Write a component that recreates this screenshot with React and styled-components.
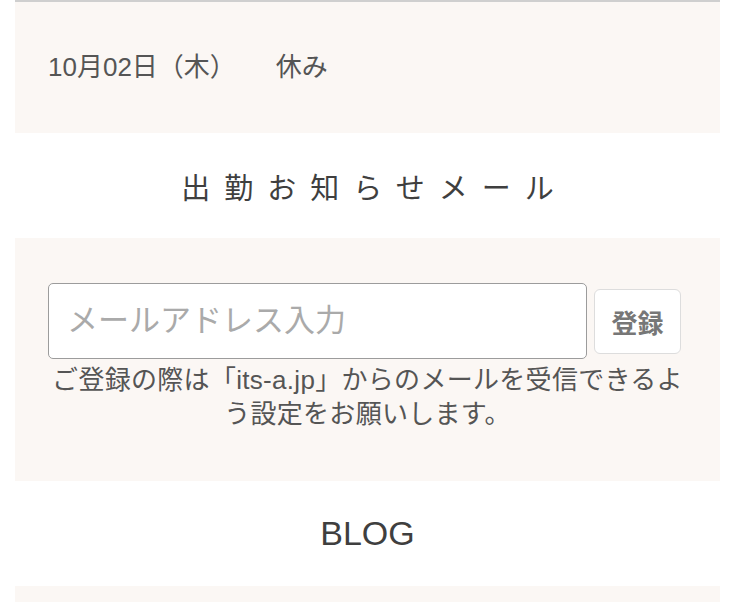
import React from 'react';
import styled, { createGlobalStyle } from 'styled-components';

const GlobalStyle = createGlobalStyle`
  html, body {
    margin: 0;
    padding: 0;
    background: #fff;
  }
  body {
    font-family: "Liberation Sans", "Noto Sans CJK JP", sans-serif;
    color: #444;
  }
`;

const Page = styled.div`
  padding: 0 10px 0 15px;
`;

const Panel = styled.section`
  background: #fbf7f4;
  border-top: ${props => (props.$topLine ? '2px solid #cfcfcf' : 'none')};
  height: ${props => props.$height}px;
  box-sizing: border-box;
`;

const DayRow = styled.div`
  display: flex;
  align-items: center;
  height: 100%;
  box-sizing: border-box;
  padding: 0 0 6px 33px;
  font-size: 26px;
  color: #555;
`;

const DayStatus = styled.span`
  margin-left: 40px;
`;

const Heading = styled.h2`
  margin: 0;
  height: ${props => props.$height}px;
  display: flex;
  align-items: center;
  justify-content: center;
  font-weight: 400;
  font-size: ${props => props.$size}px;
  letter-spacing: ${props => props.$spacing || 0}px;
  text-indent: ${props => props.$spacing || 0}px;
  color: #3f3f3f;
`;

const FormPanel = styled.section`
  background: #fbf7f4;
  padding: 45px 36px 50px;
`;

const FormRow = styled.form`
  display: flex;
  align-items: center;
  gap: 7px;
  margin-left: -3px;
`;

const EmailInput = styled.input`
  width: 539px;
  height: 76px;
  box-sizing: border-box;
  border: 1.5px solid #9c9c9c;
  border-radius: 5px;
  background: #fff;
  padding: 0 18px;
  font-family: inherit;
  font-size: 31px;
  color: #444;
  outline: none;

  &::placeholder {
    color: #aaa;
  }
`;

const SubmitButton = styled.button`
  width: 87px;
  height: 65px;
  box-sizing: border-box;
  border: 1.5px solid #ddd;
  border-radius: 6px;
  background: #fff;
  font-family: inherit;
  font-size: 26px;
  font-weight: 700;
  color: #777;
  cursor: pointer;
`;

const Notice = styled.p`
  margin: 4px -6px 0;
  text-align: center;
  font-size: 26px;
  letter-spacing: 0.3px;
  line-height: 34px;
  color: #555;
`;

export default function App() {
  return (
    <>
      <GlobalStyle />
      <Page>
        <Panel $topLine $height={133}>
          <DayRow>
            10月02日（木）<DayStatus>休み</DayStatus>
          </DayRow>
        </Panel>

        <Heading $height={105} $size={29} $spacing={14}>
          出勤お知らせメール
        </Heading>

        <FormPanel>
          <FormRow onSubmit={e => e.preventDefault()}>
            <EmailInput type="email" placeholder="メールアドレス入力" />
            <SubmitButton type="submit">登録</SubmitButton>
          </FormRow>
          <Notice>
            ご登録の際は「its-a.jp」からのメールを受信できるよう設定をお願いします。
          </Notice>
        </FormPanel>

        <Heading $height={105} $size={34}>
          BLOG
        </Heading>

        <Panel $height={40} />
      </Page>
    </>
  );
}
